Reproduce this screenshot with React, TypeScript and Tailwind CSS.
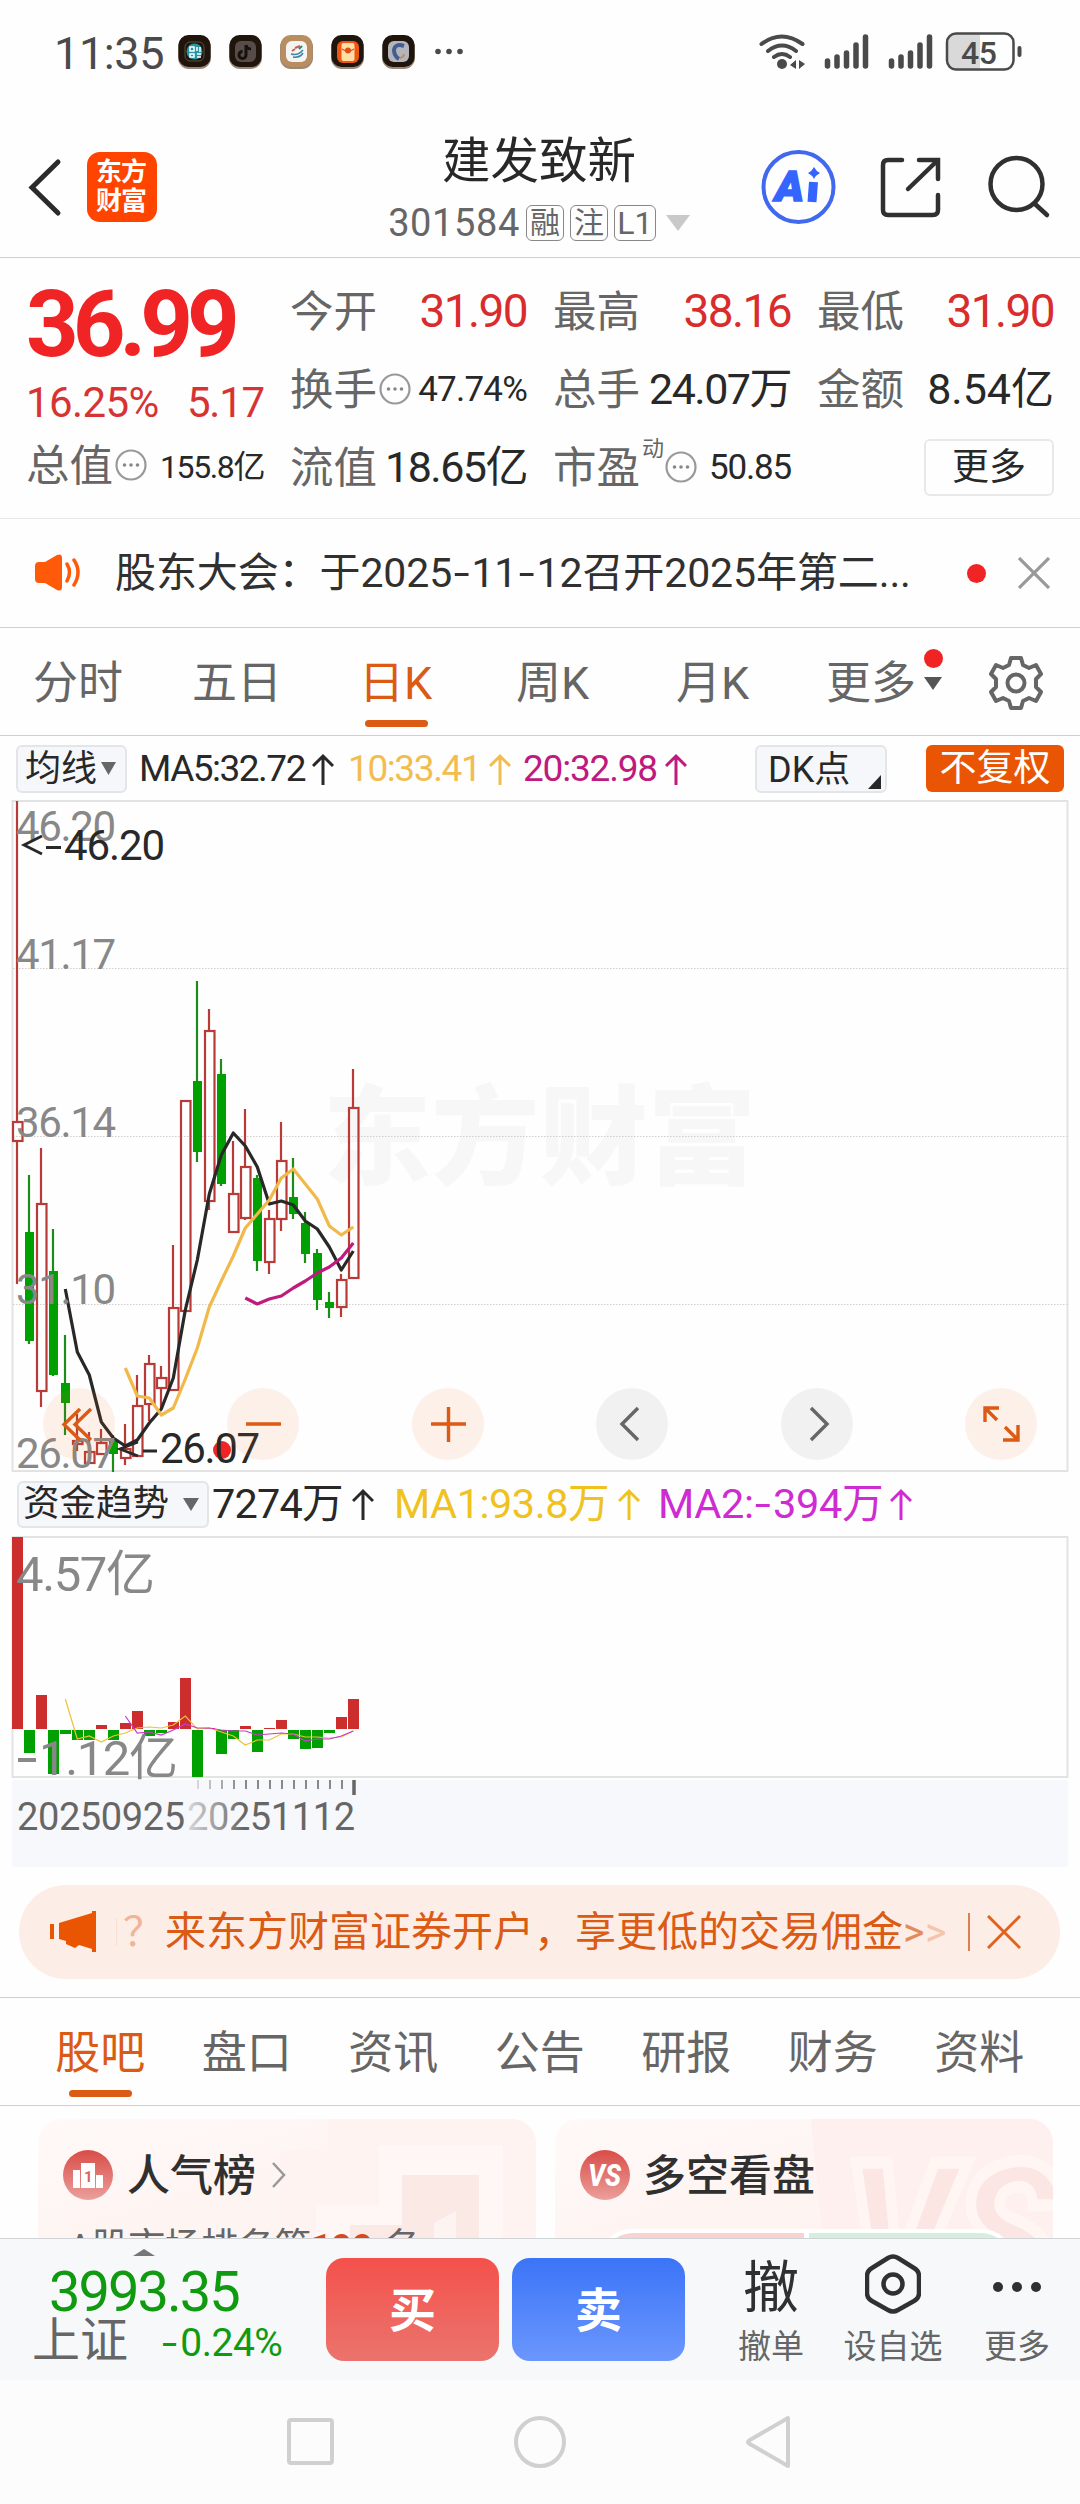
import type { ReactNode } from 'react';

// [direction, high, body top, body bottom, low], 12px per candle
const candles: Array<[string, number, number, number, number]> = [
  ['up', 801, 1121, 1141, 1284],
  ['down', 1175, 1232, 1341, 1344],
  ['up', 1148, 1203, 1391, 1407],
  ['down', 1229, 1271, 1375, 1376],
  ['down', 1335, 1383, 1403, 1435],
  ['up', 1414, 1440, 1444, 1451],
  ['up', 1432, 1451, 1463, 1463],
  ['up', 1429, 1442, 1454, 1454],
  ['down', 1435, 1441, 1454, 1472],
  ['up', 1424, 1448, 1458, 1465],
  ['up', 1375, 1405, 1456, 1456],
  ['up', 1355, 1363, 1404, 1421],
  ['up', 1366, 1377, 1388, 1408],
  ['up', 1245, 1307, 1390, 1390],
  ['up', 1100, 1100, 1311, 1311],
  ['down', 981, 1081, 1152, 1162],
  ['up', 1009, 1030, 1201, 1210],
  ['down', 1059, 1074, 1184, 1186],
  ['up', 1141, 1193, 1232, 1232],
  ['up', 1109, 1166, 1218, 1220],
  ['down', 1175, 1178, 1261, 1271],
  ['up', 1210, 1218, 1262, 1274],
  ['up', 1122, 1160, 1219, 1231],
  ['down', 1158, 1197, 1214, 1219],
  ['down', 1212, 1223, 1254, 1263],
  ['down', 1249, 1253, 1300, 1310],
  ['down', 1292, 1302, 1308, 1318],
  ['up', 1274, 1279, 1307, 1317],
  ['up', 1069, 1107, 1278, 1278],
];

const ma5 = [1289, 1352, 1375, 1422, 1438, 1446, 1440, 1423, 1409, 1378, 1310, 1260, 1194, 1155, 1133, 1146, 1167, 1204, 1201, 1205, 1221, 1229, 1247, 1270, 1251];
const ma10 = [1368, 1396, 1398, 1415, 1408, 1379, 1348, 1307, 1281, 1256, 1228, 1214, 1200, 1178, 1169, 1184, 1199, 1226, 1235, 1227];
const ma20 = [1298, 1304, 1299, 1296, 1288, 1281, 1273, 1267, 1258, 1243];

const flows = [1537, 1753, 1695, 1774, 1734, 1740, 1740, 1725, 1740, 1723, 1711, 1736, 1733, 1722, 1678, 1777, 1728, 1754, 1739, 1726, 1752, 1728, 1720, 1739, 1749, 1748, 1733, 1717, 1699];
const flowMa1 = [1699, 1739, 1736, 1742, 1736, 1733, 1728, 1727, 1728, 1725, 1716, 1729, 1728, 1732, 1736, 1745, 1740, 1740, 1734, 1734, 1737, 1737, 1738, 1737, 1731];
const flowMa2 = [1716, 1733, 1732, 1735, 1730, 1724, 1728, 1728, 1730, 1731, 1731, 1735, 1734, 1733, 1734, 1741, 1739, 1739, 1736, 1731];

// averages all end on the last candle
const toPoints = (values: number[]) =>
  values.map((y, i) => `${17.3 + 12 * (29 - values.length + i)},${y}`).join(' ');

const priceLabels: Array<[string, number]> = [
  ['46.20', 841],
  ['41.17', 969],
  ['36.14', 1137],
  ['31.10', 1304],
  ['26.07', 1468],
];

const newsTabs = ['股吧', '盘口', '资讯', '公告', '研报', '财务', '资料'];

function StatusBar() {
  return (
    <div className="flex h-24 items-start px-[54px] pt-[33px] text-[#4a4a4a]">
      <span className="w-[124px] text-[45px] leading-[41px] tracking-[-0.4px]">11:35</span>
      <svg width="300" height="40" viewBox="178 33 300 40">
        {['#1f150c', '#1f150c', '#b98d60', '#1f150c', '#1f150c'].map((fill, i) => (
          <g key={i}>
            <rect x={178 + i * 51} y="36" width="33" height="33" rx="11" fill="#9a8778" />
            <rect x={178.5 + i * 51} y="35" width="32" height="32" rx="10" fill={fill} />
          </g>
        ))}
        <rect x="185" y="42" width="19" height="19" rx="5" fill="none" stroke="#5c5035" />
        <circle cx="194.5" cy="51.5" r="8" fill="#2795a3" />
        <path d="M190 47h4v4h-4zM197 47v4M200 47v5M190 54h4v3h-4zM197 54h4M197 57h4" stroke="#fff" strokeWidth="1.5" fill="none" />
        <rect x="235" y="41" width="21" height="21" rx="6" fill="#574c47" />
        <path d="M246 45v10a3.5 3.5 0 1 1-3.5-3.5M246 45q1 4 5 4" stroke="#17110e" strokeWidth="3" fill="none" />
        <rect x="286" y="41" width="21" height="21" rx="6" fill="#f4f4f2" />
        <path d="M292 51l3-2M295 48l5-2" stroke="#d65a4a" strokeWidth="2" />
        <path d="M299 49l3-3" stroke="#2d8c6b" strokeWidth="2" />
        <path d="M291 54q7 2 12-4M293 57q7 1 10-4" stroke="#3c86a5" strokeWidth="1.5" fill="none" />
        <rect x="337" y="41" width="22" height="22" rx="6" fill="#f0560f" />
        <rect x="341.5" y="43" width="13" height="18" rx="2" fill="#ffdfa6" />
        <path d="M342 49l6 3l6-3" stroke="#e0501b" strokeWidth="1.200" fill="none" />
        <circle cx="348" cy="50.5" r="3" fill="#e0501b" />
        <rect x="388" y="41" width="21" height="21" rx="6" fill="#b4b5ba" />
        <path d="M404 46q-9-3-10 4q0 6 5 9" stroke="#455d8e" strokeWidth="4" fill="none" />
        <path d="M400 58q4-1 4-4" stroke="#b98e68" strokeWidth="2" fill="none" />
        <circle cx="438" cy="51.5" r="2.8" fill="#4a4a4a" />
        <circle cx="449" cy="51.5" r="2.8" fill="#4a4a4a" />
        <circle cx="460" cy="51.5" r="2.8" fill="#4a4a4a" />
      </svg>
      <svg width="270" height="44" viewBox="755 30 270 44" className="-mt-[3px] ml-auto mr-[1px]" fill="none" stroke="#4a4a4a">
        <g strokeWidth="4" strokeLinecap="round">
          <path d="M761.5 44q20-15 41 0M768 51q14-11 28 0M774 57q8-6 16 0" />
        </g>
        <circle cx="782" cy="64" r="5" fill="#4a4a4a" stroke="none" />
        <path d="M796 60v9l-6-4zM799 60v9l6-5z" fill="#4a4a4a" stroke="none" />
        <g strokeWidth="5.5" strokeLinecap="round">
          <path d="M827.5 61v5M837 57v9M846.5 53v13M856 45v21M865.5 37v29" />
          <path d="M891.5 61v5M901 57v9M910.5 53v13M920 45v21M929.5 37v29" />
        </g>
        <path d="M956 34h24v35h-24q-8-1-8-9V43q0-8 8-9z" fill="#d9d9d9" stroke="none" />
        <rect x="947" y="33.5" width="66.5" height="36" rx="9" strokeWidth="2.5" />
        <path d="M1019.5 48v7" strokeWidth="4" strokeLinecap="round" />
        <text x="961" y="63.5" fontSize="32" fontWeight="500" fill="#4a4a4a" stroke="none" textLength="36">45</text>
      </svg>
    </div>
  );
}

function Header() {
  return (
    <div className="flex h-[162px] border-b border-[#d0d0d0]">
      <svg width="170" height="160" viewBox="0 96 170 160" fill="none">
        <path d="M58 162L32 187.5L58 213" stroke="#2b2b2b" strokeWidth="5" strokeLinecap="round" />
        <rect x="87" y="152" width="70" height="70" rx="13" fill="#ff4400" />
        <text x="96" y="181" fontSize="26" fontWeight="700" fill="#fff" textLength="51">东方</text>
        <text x="96" y="210" fontSize="26" fontWeight="700" fill="#fff" textLength="51">财富</text>
      </svg>
      <div className="flex w-[738px] flex-col items-center">
        <div className="mt-[42px] text-[48.5px] leading-[48px] text-[#282828]">建发致新</div>
        <div className="mt-[18px] flex items-center text-[#666]">
          <span className="mr-1.5 text-[38px] leading-[38px] tracking-[0.6px]">301584</span>
          <span className="mr-1.5 flex h-9 w-[38px] items-center justify-center rounded-md border-[1.5px] border-[#888] text-[30px] leading-none">融</span>
          <span className="mr-1.5 flex h-9 w-[38px] items-center justify-center rounded-md border-[1.5px] border-[#888] text-[30px] leading-none">注</span>
          <span className="flex h-9 w-[42px] items-center justify-center rounded-md border-[1.5px] border-[#888] text-[32px] leading-none">L1</span>
          <svg width="24" height="16" className="ml-2.5"><path d="M0 0h24L12 16z" fill="#c9c9c9" /></svg>
        </div>
      </div>
      <svg width="320" height="160" viewBox="760 96 320 160" className="-ml-[148px]" fill="none" stroke="#303030" strokeWidth="4.5" strokeLinecap="round">
        <circle cx="798.5" cy="187" r="35" stroke="#4169f0" strokeWidth="4" />
        <text x="775" y="201" fontSize="42" fontWeight="900" fontStyle="italic" fill="#3465ff" stroke="#3465ff" strokeWidth="1.5" textLength="29" lengthAdjust="spacingAndGlyphs">A</text>
        <path d="M813.5 182L812 202" stroke="#3465ff" strokeWidth="9" strokeLinecap="butt" />
        <path d="M814 167q2 4 6 6q-4 2-6 6q-2-4-6-6q4-2 6-6z" fill="#3465ff" stroke="none" />
        <path d="M902 160H888q-5 0-5 5v45q0 5 5 5h45q5 0 5-5V195M919 160h19v19M937 161L908 189" />
        <circle cx="1016.5" cy="184" r="26" />
        <path d="M1035 204L1047 215" />
      </svg>
    </div>
  );
}

function Dots() {
  return (
    <svg width="32" height="32" viewBox="0 0 32 32" className="ml-[2px]">
      <circle cx="16" cy="16" r="14.5" fill="none" stroke="#999" strokeWidth="2.2" />
      <circle cx="9.5" cy="16" r="1.8" fill="#888" />
      <circle cx="16" cy="16" r="1.8" fill="#888" />
      <circle cx="22.5" cy="16" r="1.8" fill="#888" />
    </svg>
  );
}

function Quote({ label, hint, children }: { label: string; hint?: ReactNode; children: ReactNode }) {
  return (
    <div className="flex items-center justify-between leading-none">
      <div className="flex items-center text-[43.5px] text-[#666]">
        <span className="relative top-[2px]">{label}</span>
        {hint}
      </div>
      {children}
    </div>
  );
}

function QuotePanel() {
  return (
    <div className="flex h-[261px] border-b border-[#e8e8e8] pl-[26px]">
      <div className="w-[238px]">
        <div className="mt-[27px] h-[80px] text-[92px] font-bold leading-[80px] tracking-[-6px] text-[#f02424]">36.99</div>
        <div className="mt-[14px] flex h-[48px] items-center justify-between text-[42px] leading-none tracking-[-0.6px] text-[#d73333]">
          <span>16.25%</span>
          <span className="tracking-[-1.2px]">5.17</span>
        </div>
        <div className="mt-[16px] h-[46px]">
          <Quote label="总值" hint={<Dots />}>
            <span className="relative top-[2px] whitespace-nowrap text-[32px] tracking-[-1.4px] text-[#282828]">155.8亿</span>
          </Quote>
        </div>
      </div>
      <div className="ml-[26px] grid w-[764px] grid-cols-[237px_238px_237px] grid-rows-[44px_44px_44px] gap-x-[26px] gap-y-[34px] pt-[31px]">
        <Quote label="今开"><span className="text-[46px] tracking-[-1.6px] text-[#d92d2d]">31.90</span></Quote>
        <Quote label="最高"><span className="text-[46px] tracking-[-1.6px] text-[#d92d2d]">38.16</span></Quote>
        <Quote label="最低"><span className="text-[46px] tracking-[-1.6px] text-[#d92d2d]">31.90</span></Quote>
        <Quote label="换手" hint={<Dots />}><span className="text-[35px] tracking-[-0.8px] text-[#282828]">47.74%</span></Quote>
        <Quote label="总手"><span className="text-[43px] tracking-[-1.5px] text-[#282828]">24.07万</span></Quote>
        <Quote label="金额"><span className="text-[43px] text-[#282828]">8.54亿</span></Quote>
        <Quote label="流值"><span className="text-[43px] tracking-[-1.5px] text-[#282828]">18.65亿</span></Quote>
        <Quote label="市盈" hint={<><span className="-mr-[1px] mb-9 ml-[2px] text-[22px]">动</span><Dots /></>}>
          <span className="text-[35px] tracking-[-1.2px] text-[#282828]">50.85</span>
        </Quote>
        <div className="-mt-[6px] flex h-[57px] w-[130px] items-center justify-center justify-self-end rounded-md border-2 border-[#e8e8e8] text-[37px] text-[#282828]">更多</div>
      </div>
    </div>
  );
}

function Notice() {
  return (
    <div className="flex h-[109px] items-center border-b border-[#d0d0d0] pl-[35px] pr-[30px]">
      <svg width="46" height="38" viewBox="35 554 46 38" fill="none">
        <path d="M39 562h6l12-7q5-2 5 3v29q0 5-5 3l-12-7h-6q-4 0-4-4v-13q0-4 4-4z" fill="#ff5a0a" />
        <path d="M67 564q5 8 0 17M74 560q8 12 0 25" stroke="#ff5a0a" strokeWidth="3.5" strokeLinecap="round" />
      </svg>
      <div className="ml-[34px] w-[810px] whitespace-nowrap text-[41px] leading-[44px] tracking-[-0.1px] text-[#303030]">
        股东大会：于2025<span className="mx-[4px] inline-block scale-x-140">-</span>11<span className="mx-[4px] inline-block scale-x-140">-</span>12召开2025年第二...
      </div>
      <span className="ml-[42px] size-[19px] rounded-full bg-[#f02424]" />
      <svg width="32" height="32" viewBox="0 0 32 32" className="ml-auto" stroke="#999" strokeWidth="3.2">
        <path d="M1 1l30 30M31 1L1 31" />
      </svg>
    </div>
  );
}

function PeriodTabs() {
  return (
    <div className="flex h-[108px] items-center border-b border-[#d0d0d0] pl-[33px] pt-[3px] text-[45px] leading-none text-[#666]">
      <span className="w-[159px]">分时</span>
      <span className="w-[167px]">五日</span>
      <span className="relative w-[157px] text-[#db5a14]">
        日K
        <span className="absolute -bottom-[21px] left-[6px] h-[7px] w-[63px] rounded-full bg-[#db5a14]" />
      </span>
      <span className="w-[160px]">周K</span>
      <span className="w-[150px]">月K</span>
      <span className="relative flex w-[163px] items-center">
        更多
        <svg width="18" height="13" className="ml-2"><path d="M0 0h18L9 13z" fill="#555" /></svg>
        <span className="absolute -top-[12px] left-[98px] size-[19px] rounded-full bg-[#f02424]" />
      </span>
      <svg width="54" height="54" viewBox="-27 -27 54 54" fill="none" stroke="#666" strokeWidth="4" strokeLinejoin="round">
        <path d="M-5-25H5L7-18L13-15L20-18L25-9L20-4V4L25 9L20 18L13 15L7 18L5 25H-5L-7 18L-13 15L-20 18L-25 9L-20 4V-4L-25-9L-20-18L-13-15L-7-18Z" />
        <circle r="8.5" />
      </svg>
    </div>
  );
}

function Arrow() {
  return (
    <svg width="22" height="32" viewBox="0 0 22 32" fill="none" stroke="currentColor" strokeWidth="3">
      <path d="M11 32V3M1 13l10-10 10 10" />
    </svg>
  );
}

function AverageRow() {
  return (
    <div className="flex h-16 items-center pl-4 pt-px text-[36px] leading-none">
      <div className="flex h-12 w-[111px] items-center gap-[4px] rounded-md border-2 border-[#e3e5e9] bg-[#f6f7fa] pl-[7px] text-[#282828]">
        均线
        <svg width="15" height="13"><path d="M0 0h15L7.5 13z" fill="#666" /></svg>
      </div>
      <div className="ml-[12px] flex w-[209px] items-center gap-[7px] text-[#282828]"><span className="text-[37px] tracking-[-1.5px]">MA5:32.72</span><Arrow /></div>
      <div className="flex w-[175px] items-center gap-[9px] text-[#f2bd50]"><span className="text-[37px] tracking-[-1.4px]">10:33.41</span><Arrow /></div>
      <div className="flex w-[232px] items-center gap-[8px] text-[#bf1a7d]"><span className="text-[37px] tracking-[-1.2px]">20:32.98</span><Arrow /></div>
      <div className="flex h-12 w-[132px] rounded-md border-2 border-[#e3e5e9] bg-[#f6f7fa] pl-[11px] pt-[5px] text-[#282828]">
        DK点
        <svg width="13" height="14" className="ml-auto mr-1 mt-[23px]"><path d="M13 0v14H0z" fill="#282828" /></svg>
      </div>
      <div className="ml-[39px] flex h-[47px] w-[138px] items-center justify-center rounded-md bg-[#ea5504] text-[37px] text-white">不复权</div>
    </div>
  );
}

function PriceChart() {
  return (
    <div className="relative h-[672px]">
      <svg width="1080" height="672" viewBox="0 800 1080 672" fill="none">
        <text x="323" y="1176" fontSize="108" fontWeight="900" fill="#f7f7f7" textLength="433">东方财富</text>
        <rect x="12.5" y="801" width="1055" height="670" stroke="#e3e3e3" strokeWidth="2" />
        {[968.5, 1136.5, 1304.5].map((y) => (
          <path key={y} d={`M13 ${y}H1067`} stroke="#cfcfcf" strokeDasharray="1.5 1.5" />
        ))}
        {candles.map(([dir, high, top, bottom, low], i) => {
          const x = 17 + 12 * i;
          return dir === 'up' ? (
            <g key={i} stroke="#b83b37" strokeWidth="2.2">
              <path d={`M${x} ${high}V${top}M${x} ${bottom}V${low}`} />
              <rect x={x - 4} y={top + 1} width="9.5" height={bottom - top - 1} />
            </g>
          ) : (
            <g key={i}>
              <path d={`M${x} ${high}V${low}`} stroke="#1c8c1c" strokeWidth="2.2" />
              <rect x={x - 4} y={top} width="9" height={bottom - top} fill="#00a000" />
            </g>
          );
        })}
        <g strokeWidth="3.2" strokeLinejoin="round">
          <polyline points={toPoints(ma5)} stroke="#282828" />
          <polyline points={toPoints(ma10)} stroke="#f0b94a" />
          <polyline points={toPoints(ma20)} stroke="#bf1a7d" />
        </g>
        {priceLabels.map(([label, y]) => (
          <text key={label} x="16" y={y} fontSize="42" fill="#888" textLength="100">{label}</text>
        ))}
        <path d="M42 836L24 845L42 854M46 847.5H61" stroke="#282828" strokeWidth="2.8" />
        <text x="64" y="860" fontSize="42" fill="#282828" textLength="101">46.20</text>
        <path d="M138 1442L120 1449L138 1456M143 1451H157" stroke="#282828" strokeWidth="2.8" />
        <circle cx="222" cy="1450" r="9" fill="#f02424" />
        <text x="160" y="1463" fontSize="42" fill="#282828" textLength="100">26.07</text>
      </svg>
      {/* zoom and pan controls */}
      <div className="absolute left-[43px] top-[588px] flex w-[994px] justify-between">
        <Control warm><path d="M37 21L21 36.5L37 52M48 21L32 36.5L48 52" /></Control>
        <Control warm><path d="M19 36H54" /></Control>
        <Control warm><path d="M19 36H54M36.5 19V54" /></Control>
        <Control><path d="M42 20L26 36L42 52" /></Control>
        <Control><path d="M30 20L46 36L30 52" /></Control>
        <Control warm><path d="M20 34V20H34M20 20L32 32M40 39L52 51M53 37V52H38" /></Control>
      </div>
    </div>
  );
}

function Control({ warm, children }: { warm?: boolean; children: ReactNode }) {
  return (
    <svg
      width="72"
      height="72"
      viewBox="0 0 72 72"
      fill="none"
      strokeWidth="3.4"
      className={warm ? 'rounded-full bg-[#f9652018] stroke-[#db5a14]' : 'rounded-full bg-[#0000000d] stroke-[#666]'}
    >
      {children}
    </svg>
  );
}

function FlowChart() {
  return (
    <>
      <div className="flex h-16 items-center pl-[17px] text-[41.5px] leading-none">
        <div className="flex h-[47px] w-[192px] items-center gap-[14px] rounded-md border-2 border-[#e3e5e9] bg-[#f6f7fa] pl-[4px] text-[36.5px] text-[#282828]">
          资金趋势
          <svg width="16" height="13"><path d="M0 0h16L8 13z" fill="#666" /></svg>
        </div>
        <div className="ml-[3px] flex w-[182px] items-center gap-[9px] text-[#282828]"><span className="tracking-[-0.8px]">7274万</span><Arrow /></div>
        <div className="flex w-[264px] items-center gap-[9px] text-[#efc21f]"><span className="tracking-[-0.5px]">MA1:93.8万</span><Arrow /></div>
        <div className="flex items-center gap-[7px] text-[#cf2bd2]"><span className="tracking-[-0.3px]">MA2:<span className="ml-[3px] mr-[5px] inline-block scale-x-140">-</span>394万</span><Arrow /></div>
      </div>
      <svg width="1080" height="331" viewBox="0 1536 1080 331" fill="none" className="block">
        <rect x="12.5" y="1537" width="1055" height="240" stroke="#e3e3e3" strokeWidth="2" />
        {flows.map((y, i) => (
          <rect
            key={i}
            x={12 + 12 * i}
            y={y < 1730 ? y : 1730}
            width="11"
            height={Math.max(Math.abs(1730 - y) - (y < 1730 ? 1 : 0), 1)}
            fill={y < 1730 ? '#cc2e2e' : '#00a000'}
          />
        ))}
        <polyline points={toPoints(flowMa1)} stroke="#ecc335" strokeWidth="1.2" />
        <polyline points={toPoints(flowMa2)} stroke="#c93ac9" strokeWidth="1.2" />
        <text x="16" y="1591" fontSize="49" fill="#888" textLength="139">4.57亿</text>
        <path d="M18 1760H36" stroke="#888" strokeWidth="4" />
        <text x="39" y="1775" fontSize="49" fill="#888" textLength="139">1.12亿</text>
        <rect x="12" y="1780" width="1056" height="87" fill="#f7f8fb" />
        {Array.from({ length: 13 }, (_, i) => (
          <path key={i} d={`M${198 + 12 * i} 1780V1789`} stroke="#888" strokeWidth="2" opacity={Math.min(1, 0.3 + i * 0.2)} />
        ))}
        <path d="M354 1780V1795" stroke="#666" strokeWidth="3.5" />
        <defs>
          <linearGradient id="dateFade" gradientUnits="userSpaceOnUse" x1="186" y1="0" x2="244" y2="0">
            <stop stopColor="#666" stopOpacity="0.2" />
            <stop offset="1" stopColor="#666" />
          </linearGradient>
        </defs>
        <text x="17" y="1830" fontSize="38" fill="#666" textLength="168">20250925</text>
        <text x="187" y="1830" fontSize="38" fill="url(#dateFade)" textLength="168">20251112</text>
      </svg>
    </>
  );
}

function Promo() {
  return (
    <div className="ml-[19px] mr-5 mt-[18px] flex h-[94px] items-center rounded-full bg-[#fceee6] pl-[31px] text-[41px] leading-none text-[#db5a14]">
      <svg width="46" height="42" viewBox="51 1912 46 42" fill="#ea5504">
        <path d="M51 1925h4v15h-4zM60 1924L93 1914V1912h4v41h-4V1950L80 1946L76 1949L67 1945V1942L60 1940z" />
      </svg>
      <span className="ml-[20px] h-7 w-px bg-[#f9ddd0]" />
      <span className="ml-[6px] w-[42px] text-[#f1b498]">？</span>
      <span className="w-[738px] whitespace-nowrap">来东方财富证券开户，享更低的交易佣金</span>
      <span className="w-[22px] text-[#e58a5a]">&gt;</span>
      <span className="w-[43px] text-[#f5c4ab]">&gt;</span>
      <span className="h-[38px] w-[2px] bg-[#db8050]" />
      <svg width="34" height="34" viewBox="0 0 34 34" className="ml-[17px]" stroke="#e2621d" strokeWidth="3">
        <path d="M1 1l32 32M33 1L1 33" />
      </svg>
    </div>
  );
}

function NewsTabs() {
  return (
    <div className="mt-[18px] flex h-[109px] items-center border-y border-[#d0d0d0] px-[27px] pt-[4px] text-[45px] leading-none text-[#666]">
      {newsTabs.map((tab, i) => (
        <div key={tab} className={i === 0 ? 'relative flex w-[146.5px] justify-center text-[#db5a14]' : 'flex w-[146.5px] justify-center'}>
          {tab}
          {i === 0 && <span className="absolute -bottom-[21px] h-[7px] w-[63px] rounded-full bg-[#db5a14]" />}
        </div>
      ))}
    </div>
  );
}

function Cards() {
  return (
    <div className="flex h-[132px] gap-[19px] overflow-hidden pl-[38px] pt-[13px] text-[43px] font-medium leading-none text-[#303030]">
      <div className="relative h-40 w-[498px] overflow-hidden rounded-[24px] bg-gradient-to-br from-[#fff9f7] to-[#fdf0ee]">
        <svg width="498" height="160" className="absolute inset-0">
          <path d="M290 0H498V160H242V32H290z" fill="#fef3f1" />
          <path d="M341 26H465V160H278V86H341z" fill="#fff7f5" />
          <path d="M364 56H441V160H312V106H364z" fill="#fbe9e6" />
          <path d="M396 104L418 92V160H396z" fill="#fdf3f1" />
        </svg>
        <div className="relative flex items-center pl-[25px] pt-[31px]">
          <svg width="50" height="50" viewBox="0 0 50 50">
            <defs>
              <linearGradient id="badge" x1="0" y1="0" x2="0" y2="1">
                <stop stopColor="#d94c48" />
                <stop offset="1" stopColor="#eba09c" />
              </linearGradient>
            </defs>
            <circle cx="25" cy="25" r="25" fill="url(#badge)" />
            <path d="M10 20h7v18h-7zM18 13h14v25H18zM33 25h7v13h-7z" fill="#fff" />
            <text x="21" y="32" fontSize="15" fontWeight="700" fill="#d96460">1</text>
          </svg>
          <span className="ml-[14px] mt-[3px]">人气榜</span>
          <svg width="14" height="26" className="ml-4" fill="none" stroke="#999" strokeWidth="2.5"><path d="M1 1l11 12L1 25" /></svg>
        </div>
        <div className="relative mt-[29px] whitespace-nowrap pl-[30px] text-[37px] font-normal tracking-[-0.5px] text-[#666]">
          A股市场排名第<span className="mr-[2px] font-bold text-[#d84a1b]">199</span> 名
        </div>
      </div>
      <div className="relative h-40 w-[498px] overflow-hidden rounded-[24px] bg-gradient-to-br from-[#fff9f7] to-[#fdf0ee]">
        <svg width="498" height="160" className="absolute inset-0">
          <path d="M256 0H498V160H272z" fill="#fdf0ee" />
          <text x="290" y="186" fontSize="200" fontWeight="900" fontStyle="italic" fill="#fbe6e3" stroke="#fff5f2" strokeWidth="12" textLength="215" lengthAdjust="spacingAndGlyphs">VS</text>
          <path d="M45 140q4-30 34-30H424q30 0 34 30z" fill="#fff" />
          <path d="M50 140q4-26 30-26H249V140z" fill="#f8d3d2" />
          <path d="M254 114H424q26 0 30 26H254z" fill="#d6eedd" />
        </svg>
        <div className="relative flex items-center pl-[25px] pt-[31px]">
          <svg width="50" height="50" viewBox="0 0 50 50">
            <circle cx="25" cy="25" r="25" fill="url(#badge)" />
            <text x="8" y="36" fontSize="31" fontWeight="800" fontStyle="italic" fill="#fff" textLength="33" lengthAdjust="spacingAndGlyphs">VS</text>
          </svg>
          <span className="ml-[13px] mt-[3px]">多空看盘</span>
        </div>
      </div>
    </div>
  );
}

function TradeBar() {
  return (
    <div className="flex h-[142px] border-t border-[#d0d3d6] bg-[#f6f8fa] leading-none">
      <div className="w-[326px] text-[#0f9a0f]">
        <svg width="22" height="7" className="ml-[133px] mt-[10px]"><path d="M0 7h22L11 0z" fill="#777" /></svg>
        <div className="ml-[49px] mt-[8px] text-[56px] leading-[56px] tracking-[-2px]">3993.35</div>
        <div className="mt-[-3px] flex items-center pl-[32px]">
          <span className="text-[48px] text-[#666]">上证</span>
          <span className="ml-[36px] mt-[4px] text-[39px] tracking-[-0.5px]"><span className="mr-[6px] inline-block scale-x-140">-</span>0.24%</span>
        </div>
      </div>
      <div className="mt-[19px] flex h-[103px] w-[173px] items-center justify-center rounded-[18px] bg-gradient-to-b from-[#f4504b] to-[#eb736d] pt-[2px] text-[47px] font-bold text-white">买</div>
      <div className="ml-[13px] mt-[19px] flex h-[103px] w-[173px] items-center justify-center rounded-[18px] bg-gradient-to-b from-[#3b74f7] to-[#6b96fd] pt-[2px] text-[47px] font-bold text-white">卖</div>
      <div className="ml-[40px] flex w-[92px] flex-col items-center text-[33px] text-[#666]">
        <span className="mt-[21px] text-[56px] leading-[56px] text-[#303030]">撤</span>
        <span className="mt-[14px]">撤单</span>
      </div>
      <div className="ml-[21px] flex w-[110px] flex-col items-center text-[33px] text-[#666]">
        <svg width="56" height="60" viewBox="0 0 56 60" className="mt-[15px]" fill="none" stroke="#303030" strokeWidth="4.5">
          <path d="M23 4q5-3 10 0L49 14q5 3 5 8v17q0 5-5 8L33 56q-5 3-10 0L7 47q-5-3-5-8V22q0-5 5-8z" />
          <circle cx="28" cy="30" r="9.5" />
        </svg>
        <span className="mt-[16px] whitespace-nowrap">设自选</span>
      </div>
      <div className="ml-[34px] flex w-[70px] flex-col items-center text-[33px] text-[#666]">
        <svg width="50" height="12" className="mt-[42px]" fill="#303030">
          <circle cx="6" cy="6" r="5" />
          <circle cx="25" cy="6" r="5" />
          <circle cx="44" cy="6" r="5" />
        </svg>
        <span className="mt-[37px]">更多</span>
      </div>
    </div>
  );
}

function SystemNav() {
  return (
    <div className="flex h-[124px] items-center bg-[#fcfcfc] pl-[286px]">
      <svg width="50" height="50" fill="none" stroke="#d0d0d0" strokeWidth="4"><rect x="3" y="3" width="43" height="43" rx="2" /></svg>
      <svg width="54" height="54" className="ml-[177px]" fill="none" stroke="#d0d0d0" strokeWidth="4"><circle cx="27" cy="27" r="24" /></svg>
      <svg width="46" height="54" className="ml-[178px]" fill="none" stroke="#d0d0d0" strokeWidth="4" strokeLinejoin="round"><path d="M43 3V51L4 28.5Q2 27 4 25.5z" /></svg>
    </div>
  );
}

export default function App() {
  return (
    <div className="h-[2504px] w-[1080px] overflow-hidden bg-[#fefefe] font-['Roboto','Noto_Sans_CJK_SC',sans-serif]">
      <StatusBar />
      <Header />
      <QuotePanel />
      <Notice />
      <PeriodTabs />
      <AverageRow />
      <PriceChart />
      <FlowChart />
      <Promo />
      <NewsTabs />
      <Cards />
      <TradeBar />
      <SystemNav />
    </div>
  );
}
